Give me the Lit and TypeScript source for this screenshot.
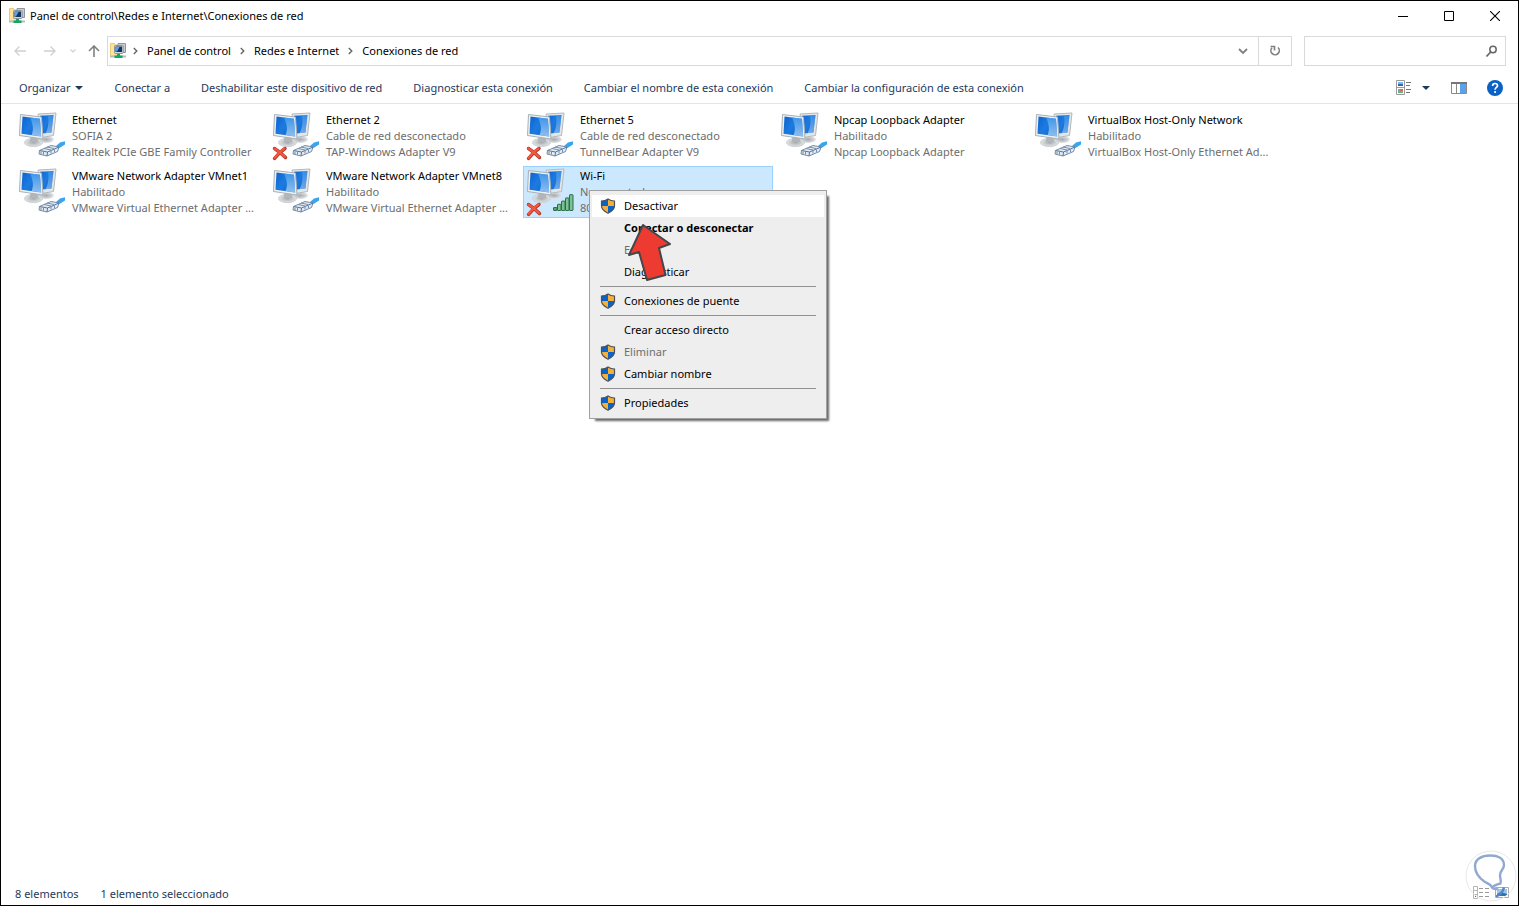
import { LitElement, html, svg, css, nothing } from 'lit';
import { customElement, property } from 'lit/decorators.js';
import { classMap } from 'lit/directives/class-map.js';

type Overlay = 'plug' | 'unplugged' | 'wifi-off';

interface Adapter {
  name: string;
  status: string;
  device: string;
  overlay: Overlay;
  selected?: boolean;
}

interface MenuEntry {
  label: string;
  shield?: boolean;
  disabled?: boolean;
  strong?: boolean;
  hot?: boolean;
}

const ADAPTERS: Adapter[] = [
  { name: 'Ethernet', status: 'SOFIA 2', device: 'Realtek PCIe GBE Family Controller', overlay: 'plug' },
  { name: 'Ethernet 2', status: 'Cable de red desconectado', device: 'TAP-Windows Adapter V9', overlay: 'unplugged' },
  { name: 'Ethernet 5', status: 'Cable de red desconectado', device: 'TunnelBear Adapter V9', overlay: 'unplugged' },
  { name: 'Npcap Loopback Adapter', status: 'Habilitado', device: 'Npcap Loopback Adapter', overlay: 'plug' },
  { name: 'VirtualBox Host-Only Network', status: 'Habilitado', device: 'VirtualBox Host-Only Ethernet Ad...', overlay: 'plug' },
  { name: 'VMware Network Adapter VMnet1', status: 'Habilitado', device: 'VMware Virtual Ethernet Adapter ...', overlay: 'plug' },
  { name: 'VMware Network Adapter VMnet8', status: 'Habilitado', device: 'VMware Virtual Ethernet Adapter ...', overlay: 'plug' },
  { name: 'Wi-Fi', status: 'No conectado', device: '802.11n USB', overlay: 'wifi-off', selected: true },
];

const MENU: MenuEntry[][] = [
  [
    { label: 'Desactivar', shield: true, hot: true },
    { label: 'Conectar o desconectar', strong: true },
    { label: 'Estado', disabled: true },
    { label: 'Diagnosticar' },
  ],
  [{ label: 'Conexiones de puente', shield: true }],
  [
    { label: 'Crear acceso directo' },
    { label: 'Eliminar', shield: true, disabled: true },
    { label: 'Cambiar nombre', shield: true },
  ],
  [{ label: 'Propiedades', shield: true }],
];

const COMMANDS = [
  'Conectar a',
  'Deshabilitar este dispositivo de red',
  'Diagnosticar esta conexión',
  'Cambiar el nombre de esta conexión',
  'Cambiar la configuración de esta conexión',
];

const networkFolder = html`<svg width="16" height="16" viewBox="0 0 16 16" aria-hidden="true">
  <path d="M.5 .5h4l1 1.500h3v11.500h-8z" fill="#ffe39a" stroke="#ecc873"/>
  <path d="M8 .5h7.500v9H13V3H8z" fill="#c9cdd2" stroke="#8f979e"/>
  <rect x="4.500" y="2.500" width="8.500" height="8" rx=".8" fill="#d5dade" stroke="#8b949c"/>
  <rect x="5.500" y="3.500" width="6.500" height="5.500" fill="#17335f"/>
  <path d="M6 4h3.500L7 8.500H6z" fill="#58a4ee"/>
  <path d="M0 13.500h16" stroke="#b3bcc2" stroke-width="2"/>
  <path d="M7 11h3v1.500h2.500v2.500h-8v-2.500H7z" fill="#12a85c"/>
</svg>`;

const shieldIcon = html`<svg width="16" height="16" viewBox="0 0 16 16" aria-hidden="true">
  <path d="M8 1C6.200 2.300 4 3 1.500 3v5H8z" fill="#0a63c9"/>
  <path d="M8 1c1.800 1.300 4 2 6.500 2v5H8z" fill="#f6b035"/>
  <path d="M1.500 8H8v7.200C4.500 13.500 1.500 11.200 1.500 8z" fill="#f6b035"/>
  <path d="M14.500 8H8v7.200c3.500-1.700 6.500-4 6.500-7.200z" fill="#0a63c9"/>
  <path d="M8 1c1.800 1.300 4 2 6.500 2v5c0 3.200-3 5.500-6.500 7.200C4.500 13.500 1.500 11.200 1.500 8V3C4 3 6.200 2.300 8 1z" fill="none" stroke="#4d5157" stroke-width="1.200"/>
</svg>`;

const plug = svg`
  <path d="M41 36l4-3.500 5-1.300v3.200l-5.500 3.600z" fill="#39a5ee"/>
  <path d="M24.500 40.500l11.500-5 8 1.500-1.500 4.500-10.500 4.500-8-2z" fill="#e4ebf2" stroke="#6f8bad"/>
  <path d="M24.500 40.500l8 1.500-.5 4M32.500 42L44 37" fill="none" stroke="#56749b"/>
  <path d="M29 38.500l7 1.500M32 37l7 1.500M36 41v2.500M39.500 39.500V42" fill="none" stroke="#7690b2"/>
  <path d="M26 41.500V44M28.500 42v2.500" stroke="#84935a" fill="none"/>`;

const cross = svg`
  <path d="M5.500 38.500c4 2.500 7.500 5.500 11 9M16 38.500c-4 2.500-7.500 6-10.500 10" fill="none" stroke="#b03322" stroke-width="3.400" stroke-linecap="round"/>
  <path d="M5.500 38.500c4 2.500 7.500 5.500 10.500 8.500M15.500 38.500c-4 2.500-7 6-10 9.500" fill="none" stroke="#f05843" stroke-width="2.200" stroke-linecap="round"/>`;

const bars = svg`
  ${[0, 1, 2, 3, 4].map(
    (i) => svg`<rect x=${30.5 + i * 4} y=${41.500 - i * 3.2} width="3.500" height=${3 + i * 3.2} rx=".5" fill=${i ? '#7cc296' : '#5aa576'} stroke="#2c6b47"/>`,
  )}`;

const adapterIcon = (overlay: Overlay) => html`<svg class="pc" width="52" height="52" viewBox="0 0 52 52" aria-hidden="true">
  <defs>
    <linearGradient id="scr" x1="0" y1="0" x2="1" y2=".6">
      <stop offset="0" stop-color="#0d62cf"/><stop offset=".5" stop-color="#1c7be0"/><stop offset="1" stop-color="#1767d0"/>
    </linearGradient>
    <linearGradient id="glow" x1="0" y1="0" x2="0" y2="1">
      <stop offset="0" stop-color="#4ea3ee"/><stop offset="1" stop-color="#c3e4fb"/>
    </linearGradient>
    <radialGradient id="base"><stop offset="0" stop-color="#a4a9ad"/><stop offset="1" stop-color="#e4e6e8"/></radialGradient>
  </defs>
  <ellipse cx="31" cy="29.500" rx="8" ry="3.500" fill="url(#base)"/>
  <path d="M23 4l18-1-2.500 22.500-12 2z" fill="#e4e7e9" stroke="#b4b9bd"/>
  <path d="M25 5.700l13.500-.7-2 17.500-9 1z" fill="url(#scr)"/>
  <path d="M33 5.500l5.500-.5-2 17.500-6 .7c3-5 3.500-12 2.500-17.700z" fill="url(#glow)" opacity=".5"/>
  <ellipse cx="18.500" cy="32.500" rx="9" ry="4" fill="url(#base)" stroke="#c9cdd0"/>
  <path d="M15.500 27h7l1 5h-9z" fill="#b1b6ba"/>
  <path d="M5.500 4.500L26.500 7l1.500 22L4.500 25.500z" fill="#eef0f1" stroke="#aab0b5"/>
  <path d="M7.500 6.500l17.500 2.200 1.200 17.800-19.700-2.800z" fill="url(#scr)"/>
  <path d="M15 7.500l10 1.200 1.200 17.800-9.700-1.400c2.500-5 1.500-11.600-1.500-17.600z" fill="url(#glow)" opacity=".7"/>
  ${overlay === 'wifi-off' ? bars : plug}
  ${overlay === 'plug' ? nothing : cross}
</svg>`;

@customElement('adapter-tile')
export class AdapterTile extends LitElement {
  @property({ attribute: false }) adapter!: Adapter;

  static styles = css`
    :host { display: block; }
    .tile {
      display: flex;
      width: 100%;
      height: 52px;
      padding: 0;
      border: 1px solid transparent;
      background: none;
      font: inherit;
      line-height: 16px;
      text-align: left;
      color: #6d6d6d;
    }
    .tile.selected { background: #cce8ff; border-color: #99d1ff; }
    .pc { flex: none; margin: -1px 5px 0 -1px; }
    .lines { display: block; min-width: 0; padding-top: 1px; }
    .line { display: block; white-space: nowrap; }
    .name { color: #000; }
  `;

  render() {
    const a = this.adapter;
    return html`<button class=${classMap({ tile: true, selected: !!a.selected })}>
      ${adapterIcon(a.overlay)}
      <span class="lines">
        <span class="line name">${a.name}</span>
        <span class="line">${a.status}</span>
        <span class="line">${a.device}</span>
      </span>
    </button>`;
  }
}

@customElement('context-menu')
export class ContextMenu extends LitElement {
  static styles = css`
    :host { display: block; }
    .menu {
      width: 238px;
      box-sizing: border-box;
      padding: 4px 2px;
      border: 1px solid #a0a0a0;
      background: #eee;
      box-shadow: 4px 4px 2px -2px rgba(0, 0, 0, 0.6);
    }
    .item {
      display: flex;
      align-items: center;
      gap: 8px;
      width: 100%;
      height: 22px;
      padding: 0 8px;
      border: 0;
      background: none;
      font: inherit;
      color: #000;
      white-space: nowrap;
    }
    .slot { display: flex; width: 16px; height: 16px; }
    .hot { background: #fff; }
    .strong { font-weight: 700; }
    .item:disabled { color: #6d6d6d; }
    .rule { height: 1px; margin: 3px 8px; border: 0; background: #919191; }
  `;

  render() {
    return html`<div class="menu" role="menu">
      ${MENU.map(
        (group, g) => html`${g ? html`<hr class="rule" />` : nothing}
          ${group.map(
            (m) => html`<button
              role="menuitem"
              class=${classMap({ item: true, hot: !!m.hot, strong: !!m.strong })}
              ?disabled=${m.disabled}
            ><span class="slot">${m.shield ? shieldIcon : nothing}</span>${m.label}</button>`,
          )}`,
      )}
    </div>`;
  }
}

@customElement('app-root')
export class AppRoot extends LitElement {
  static styles = css`
    :host {
      display: block;
      font: 11px/16px 'Noto Sans', 'Open Sans', sans-serif;
      color: #000;
    }
    .window {
      display: flex;
      flex-direction: column;
      box-sizing: border-box;
      min-height: 100vh;
      border: 1px solid #000;
      background: #fff;
    }
    button, input { font: inherit; color: inherit; }
    button { padding: 0; border: 0; background: none; }
    svg { display: block; flex: none; }

    .titlebar { display: flex; align-items: center; height: 29px; padding-left: 8px; gap: 5px; }
    .title { flex: 1; margin: 0; font: inherit; white-space: nowrap; }
    .caption { display: flex; }
    .caption button { display: grid; place-items: center; width: 46px; height: 29px; }

    .navbar { display: flex; align-items: stretch; height: 30px; margin: 6px 12px 0 8px; }
    .arrows { display: flex; align-items: center; box-sizing: border-box; width: 98px; padding-left: 5px; }
    .arrows button { display: grid; align-items: center; height: 30px; }
    .arrows .forward { margin: 0 14px 0 18px; }
    .arrows .recent { margin-right: 12px; }
    .address { display: flex; flex: 1; border: 1px solid #d9d9d9; align-items: center; min-width: 0; }
    .crumbs { display: flex; flex: 1; align-items: center; margin: 0; padding: 0 0 0 2px; list-style: none; }
    .crumbs li { display: flex; align-items: center; }
    .crumbs .chevron { margin: 0 9px 0 7px; }
    .crumbs a { padding-right: 2px; color: inherit; text-decoration: none; white-space: nowrap; }
    .address button { display: grid; place-items: center; width: 30px; height: 28px; }
    .address .refresh { width: 33px; border-left: 1px solid #d9d9d9; }
    .search { display: flex; align-items: center; width: 202px; box-sizing: border-box; margin-left: 12px; padding-right: 7px; border: 1px solid #d9d9d9; }
    .search input { flex: 1; min-width: 0; height: 26px; padding: 0 8px; border: 0; outline: 0; background: none; }

    .toolbar { display: flex; align-items: center; gap: 31px; height: 31px; padding: 6px 15px 0 18px; border-bottom: 1px solid #e5e5e5; color: #1e395b; }
    .toolbar button { display: flex; align-items: center; gap: 5px; white-space: nowrap; }
    .views { display: flex; align-items: center; gap: 10px; margin-left: auto; }
    .views .pane { margin: 0 10px 0 11px; }

    .content { flex: 1; padding: 6px 4px 6px 14px; }
    .grid { display: grid; grid-template-columns: repeat(auto-fill, 250px); gap: 4px; margin: 0; padding: 0; list-style: none; }
    .cell { position: relative; }
    .popup { position: absolute; z-index: 1; left: 66px; top: 24px; }
    .pointer { position: absolute; z-index: 2; left: 104px; top: 56px; }

    .status { position: relative; display: flex; align-items: center; gap: 22px; height: 23px; padding: 0 8px 0 14px; color: #1e395b; }
    .modes { display: flex; gap: 3px; margin: 0 0 2px auto; }
    .watermark { position: absolute; right: 1px; bottom: 1px; pointer-events: none; }
  `;

  private chevron() {
    return html`<svg class="chevron" width="5" height="8" viewBox="0 0 5 8" aria-hidden="true"><path d="M.8 1l3 3-3 3" fill="none" stroke="#666" stroke-width="1.400"/></svg>`;
  }

  private caret() {
    return html`<svg width="8" height="4" viewBox="0 0 8 4" aria-hidden="true"><path d="M0 0h8L4 4z" fill="#1e395b"/></svg>`;
  }

  render() {
    return html`<div class="window">
      <header class="titlebar">
        ${networkFolder}
        <h1 class="title">Panel de control\\Redes e Internet\\Conexiones de red</h1>
        <div class="caption">
          <button aria-label="Minimizar"><svg width="10" height="10"><path d="M0 5.500h10" stroke="#000"/></svg></button>
          <button aria-label="Maximizar"><svg width="10" height="10"><path d="M.5 .5h9v9h-9z" fill="none" stroke="#000"/></svg></button>
          <button aria-label="Cerrar"><svg width="10" height="10"><path d="M0 0l10 10M10 0L0 10" stroke="#000" stroke-width="1.100"/></svg></button>
        </div>
      </header>

      <nav class="navbar">
        <div class="arrows">
          <button aria-label="Atrás"><svg width="12" height="10"><path d="M12 5H1M5.500 .5L1 5l4.500 4.500" fill="none" stroke="#d0d0d0" stroke-width="1.400"/></svg></button>
          <button aria-label="Adelante" class="forward"><svg width="12" height="10"><path d="M0 5h11M6.500 .5L11 5 6.500 9.500" fill="none" stroke="#d0d0d0" stroke-width="1.400"/></svg></button>
          <button aria-label="Recientes" class="recent"><svg width="6" height="4"><path d="M.5 .5L3 3 5.500 .5" fill="none" stroke="#d0d0d0" stroke-width="1.200"/></svg></button>
          <button aria-label="Subir"><svg width="12" height="12"><path d="M6 12V1M1 6l5-5 5 5" fill="none" stroke="#808080" stroke-width="1.600"/></svg></button>
        </div>
        <div class="address">
          <ol class="crumbs">
            <li>${networkFolder}</li>
            <li>${this.chevron()}<a href="#panel">Panel de control</a></li>
            <li>${this.chevron()}<a href="#redes">Redes e Internet</a></li>
            <li>${this.chevron()}<a href="#conexiones">Conexiones de red</a></li>
          </ol>
          <button aria-label="Historial"><svg width="10" height="7"><path d="M1 1l4 4 4-4" fill="none" stroke="#808080" stroke-width="1.800"/></svg></button>
          <button class="refresh" aria-label="Actualizar"><svg width="12" height="12" viewBox="0 0 12 12"><path d="M9 2.500A4.200 4.200 0 1 1 3 2.700" fill="none" stroke="#808080" stroke-width="1.600"/><path d="M1.500 1.500h4v4" fill="none" stroke="#808080" stroke-width="1.600"/></svg></button>
        </div>
        <div class="search">
          <input type="search" aria-label="Buscar" />
          <svg width="13" height="13" aria-hidden="true"><circle cx="8" cy="4.500" r="3.200" fill="none" stroke="#666" stroke-width="1.500"/><path d="M5.700 7L1.500 11.500" stroke="#666" stroke-width="1.800"/></svg>
        </div>
      </nav>

      <div class="toolbar">
        <button>Organizar ${this.caret()}</button>
        ${COMMANDS.map((c) => html`<button>${c}</button>`)}
        <div class="views">
          <button aria-label="Cambiar vista"><svg width="16" height="16">
            <path d="M.5 .5h8v14h-8zM.5 7.500h8" fill="#fff" stroke="#9a9a9a"/>
            <rect x="2" y="2" width="5" height="2" fill="#7fb8ea"/><rect x="2" y="4" width="5" height="2" fill="#2c6aa8"/>
            <rect x="2" y="9" width="5" height="4" fill="#6cb08e"/><rect x="4" y="9" width="3" height="2" fill="#d9685b"/>
            <path d="M10 2.500h5M10 5.500h4M10 9.500h5M10 12.500h4" stroke="#777"/></svg></button>
          <button aria-label="Más opciones">${this.caret()}</button>
          <button class="pane" aria-label="Panel de vista previa"><svg width="16" height="12">
            <path d="M.5 .5h15v11H.5zM5.500 2v9" fill="#fff" stroke="#8a8a8a"/><path d="M0 1h16" stroke="#777" stroke-width="2"/>
            <rect x="9" y="2" width="6" height="9" fill="#5ba1ec"/></svg></button>
          <button aria-label="Ayuda"><svg width="16" height="16"><circle cx="8" cy="8" r="8" fill="#0b61c4"/>
            <path d="M5.600 5.900C5.600 4.300 6.600 3.500 8 3.500s2.500 .8 2.500 2.200c0 1.600-2.400 1.900-2.400 4" fill="none" stroke="#fff" stroke-width="1.700"/><circle cx="8.100" cy="12" r="1.100" fill="#fff"/></svg></button>
        </div>
      </div>

      <main class="content">
        <ul class="grid">
          ${ADAPTERS.map(
            (a) => html`<li class="cell">
              <adapter-tile .adapter=${a}></adapter-tile>
              ${a.selected
                ? html`<context-menu class="popup"></context-menu>
                    <svg class="pointer" width="46" height="60" viewBox="0 0 46 60" aria-hidden="true">
                      <path d="M16 3L43 22 32 26 38.500 53 20 58 12 30 2 33z" fill="#ed3b32" stroke="#46464a" stroke-width="2" stroke-linejoin="round"/></svg>`
                : nothing}
            </li>`,
          )}
        </ul>
      </main>

      <footer class="status">
        <span>8 elementos</span>
        <span>1 elemento seleccionado</span>
        <div class="modes">
          <button aria-label="Vista de detalles"><svg width="17" height="13">
            <path d="M.5 .5h4v12h-4zM.5 4.500h4M.5 8.500h4" fill="none" stroke="#b5b5b5"/><path d="M6 2.500h4M12 2.500h4M6 6.500h4M12 6.500h4M6 10.500h4M12 10.500h4" stroke="#999"/><path d="M2 10.500h1" stroke="#d33"/></svg></button>
          <button aria-label="Vista de iconos"><svg width="17" height="13"><path d="M2.500 1.500h13v10h-13z" fill="#fff" stroke="#aaa"/><path d="M4 3h10v7H4z" fill="#9cc6ec"/><path d="M4 8l4-2 6 2v2H4z" fill="#3b6ea8"/></svg></button>
        </div>
        <svg class="watermark" width="52" height="54" viewBox="0 0 52 54" aria-hidden="true">
          <circle cx="26" cy="26" r="25" fill="none" stroke="#e9e9e9"/>
          <path d="M27.500 38C26 34 23 33.500 20 32 14 28 10 22 10 16 10 9 17 5.500 25 5.500c8 0 14 3 14 9.500 0 4-4 6-4 10 0 4 1.500 5 .5 8.500-4 1-8 3-8 4.500 0 1 4 .5 5.500 1.500" fill="none" stroke="#91a9d1" stroke-width="2.400" stroke-linejoin="round"/>
          <path d="M39 37.500c-1 4-4 7.500-8 9" fill="none" stroke="#4f86c8" stroke-width="2.400"/></svg>
      </footer>
    </div>`;
  }
}
